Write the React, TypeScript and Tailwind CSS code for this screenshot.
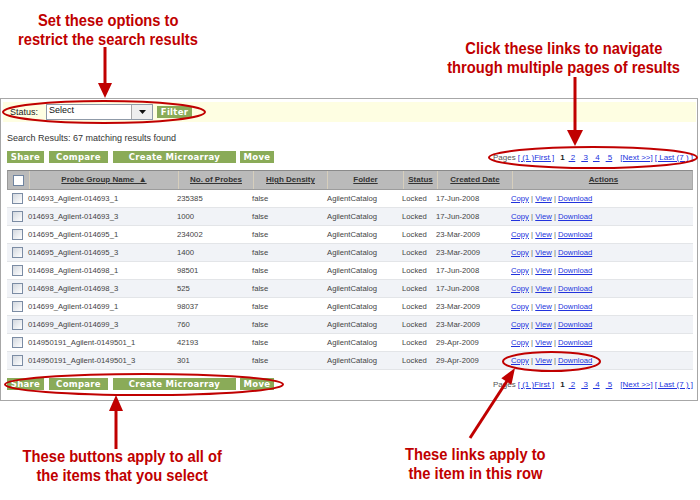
import React from "react";

const rows: [string, string, string][] = [
  ["014693_Agilent-014693_1", "235385", "17-Jun-2008"],
  ["014693_Agilent-014693_3", "1000", "17-Jun-2008"],
  ["014695_Agilent-014695_1", "234002", "23-Mar-2009"],
  ["014695_Agilent-014695_3", "1400", "23-Mar-2009"],
  ["014698_Agilent-014698_1", "98501", "17-Jun-2008"],
  ["014698_Agilent-014698_3", "525", "17-Jun-2008"],
  ["014699_Agilent-014699_1", "98037", "23-Mar-2009"],
  ["014699_Agilent-014699_3", "760", "23-Mar-2009"],
  ["014950191_Agilent-0149501_1", "42193", "29-Apr-2009"],
  ["014950191_Agilent-0149501_3", "301", "29-Apr-2009"],
];

const grid = "grid grid-cols-[21px_149px_75px_74px_76px_34px_75px_182px]";

function Checkbox() {
  return (
    <div className="w-[11px] h-[11px] border border-[#7b8ca4] bg-linear-to-br from-[#d3d8df] to-white" />
  );
}

function Btn({ label, cls }: { label: string; cls: string }) {
  return (
    <div
      className={
        "h-[12px] flex items-center justify-center bg-[#8aab58] text-white font-bold text-[8.5px] tracking-[0.3px] font-['DejaVu_Sans',Verdana,sans-serif] " +
        cls
      }
    >
      {label}
    </div>
  );
}

function Buttons() {
  return (
    <div className="flex">
      <Btn label="Share" cls="w-[37px]" />
      <Btn label="Compare" cls="w-[59px] ml-[5px]" />
      <Btn label="Create Microarray" cls="w-[123px] ml-[5px]" />
      <Btn label="Move" cls="w-[34px] ml-[4px]" />
    </div>
  );
}

function Pager() {
  const link = "text-[#2233dd] underline";
  return (
    <div className="flex items-baseline text-[8px] leading-[10px] whitespace-pre">
      <span className="text-[#555]">Pages</span>
      <span className={link + " ml-[2px]"}>[ (1 )First ]</span>
      <span className="ml-[6px] font-bold text-[#222]">1</span>
      <span className={link + " ml-[4px]"}> 2</span>
      <span className={link + " ml-[6px]"}> 3</span>
      <span className={link + " ml-[5px]"}> 4</span>
      <span className={link + " ml-[6px]"}> 5</span>
      <span className={link + " ml-[8px]"}>[Next &gt;&gt;]</span>
      <span className={link + " ml-[2px]"}>[ Last (7 ) ]</span>
    </div>
  );
}

function CalloutLine({ children }: { children: React.ReactNode }) {
  return (
    <div className="whitespace-nowrap text-[17px] leading-[19px] font-bold text-[#c00000] scale-x-[0.865]">
      {children}
    </div>
  );
}

function Table() {
  const head =
    "flex items-center justify-center border-l border-[#d6cebc] font-bold underline text-[#333] text-[8px]";
  return (
    <div className="mt-[7px] ml-[6px] w-[686px]">
      <div
        className={
          grid +
          " h-[20px] bg-[#bababa] border-t border-b border-l border-r border-t-[#8a8a8a] border-b-[#9c9c9c] border-l-[#999] border-r-[#aaa]"
        }
      >
        <div className="flex items-center pl-[5px]">
          <div className="w-[11px] h-[11px] border border-[#6f84a0] bg-white" />
        </div>
        <div className={head}>Probe Group Name&nbsp;&nbsp;▲</div>
        <div className={head}>No. of Probes</div>
        <div className={head}>High Density</div>
        <div className={head}>Folder</div>
        <div className={head}>Status</div>
        <div className={head}>Created Date</div>
        <div className={head + " no-underline"}>Actions</div>
      </div>
      {rows.map((r, i) => (
        <div
          key={i}
          className={
            grid +
            " h-[18px] items-center border-b border-[#e3e5e8] text-[7.7px] text-[#444] " +
            (i % 2 === 1 ? "bg-[#f1f3f7]" : "bg-white")
          }
        >
          <div className="pl-[5px] flex items-center">
            <Checkbox />
          </div>
          <div>{r[0]}</div>
          <div>{r[1]}</div>
          <div>false</div>
          <div className="pl-[1px]">AgilentCatalog</div>
          <div>Locked</div>
          <div>{r[2]}</div>
          <div className="whitespace-pre">
            <span className="text-[#2233dd] underline">Copy</span>
            <span className="text-[#666]"> | </span>
            <span className="text-[#2233dd] underline">View</span>
            <span className="text-[#666]"> | </span>
            <span className="text-[#2233dd] underline">Download</span>
          </div>
        </div>
      ))}
    </div>
  );
}

export default function App() {
  const red = "#c00000";
  return (
    <div className="relative w-[700px] h-[500px] bg-white overflow-hidden font-['Liberation_Sans',Arial,sans-serif]">
      {/* top callouts */}
      <div className="h-[98px] flex">
        <div className="w-[216px] pt-[11px] flex flex-col items-center">
          <CalloutLine>Set these options to</CalloutLine>
          <CalloutLine>restrict the search results</CalloutLine>
        </div>
        <div className="ml-[218px] w-[260px] pt-[39px] flex flex-col items-center">
          <CalloutLine>Click these links to navigate</CalloutLine>
          <CalloutLine>through multiple pages of results</CalloutLine>
        </div>
      </div>

      {/* panel */}
      <div className="w-[698px] border border-[#a7a7a7] pb-[10px]">
        <div className="mt-[3px] ml-[2px] mr-[1px] h-[20px] bg-[#fefee2] flex items-center">
          <span className="ml-[7px] text-[9px] text-[#222] mt-[2px]">Status:</span>
          <div className="ml-[8px] w-[107px] h-[16px] border border-[#8f9aa8] bg-white flex">
            <div className="flex-1 pl-[2px] text-[9px] leading-[11px] text-[#111]">Select</div>
            <div className="w-[21px] border-l border-[#a8a8a8] bg-[#eeeeee] flex items-center justify-center">
              <svg width="7" height="4" viewBox="0 0 7 4">
                <polygon points="0,0 7,0 3.5,4" fill="#111" />
              </svg>
            </div>
          </div>
          <Btn label="Filter" cls="w-[35px] ml-[4px]" />
        </div>

        <div className="mt-[10px] ml-[6px] text-[9px] leading-[12px] text-[#333]">
          Search Results: 67 matching results found
        </div>

        <div className="mt-[7px] ml-[6px] mr-[4px] h-[12px] flex items-end justify-between">
          <Buttons />
          <Pager />
        </div>

        <Table />

        <div className="mt-[8px] ml-[6px] mr-[4px] h-[12px] flex items-end justify-between">
          <Buttons />
          <Pager />
        </div>
      </div>

      {/* bottom callouts */}
      <div className="flex">
        <div className="w-[245px] pt-[46px] flex flex-col items-center">
          <CalloutLine>These buttons apply to all of</CalloutLine>
          <CalloutLine>the items that you select</CalloutLine>
        </div>
        <div className="ml-[130px] w-[200px] pt-[44px] flex flex-col items-center">
          <CalloutLine>These links apply to</CalloutLine>
          <CalloutLine>the item in this row</CalloutLine>
        </div>
      </div>

      {/* annotation overlay: arrows and ellipses */}
      <svg
        className="absolute left-0 top-0 pointer-events-none"
        width="700"
        height="500"
        viewBox="0 0 700 500"
      >
        <g fill="none" stroke={red} strokeWidth="2">
          <ellipse cx="104" cy="112" rx="101" ry="11" />
          <ellipse cx="593" cy="157.5" rx="104" ry="10.5" />
          <ellipse cx="144" cy="384.5" rx="139" ry="10.5" />
          <ellipse cx="551.5" cy="361.5" rx="48.5" ry="9.5" />
        </g>
        <g stroke={red} strokeWidth="3">
          <line x1="105" y1="47" x2="105" y2="85" />
          <line x1="575" y1="77" x2="575" y2="132" />
          <line x1="116" y1="449" x2="116" y2="410" />
          <line x1="470" y1="438" x2="507" y2="381" />
        </g>
        <g fill={red}>
          <polygon points="98,83 112,83 105,98" />
          <polygon points="567,130 583,130 575,146" />
          <polygon points="109,411 123,411 116,395" />
          <polygon points="515,368 511.4,384.7 501.3,378.3" />
        </g>
      </svg>
    </div>
  );
}
